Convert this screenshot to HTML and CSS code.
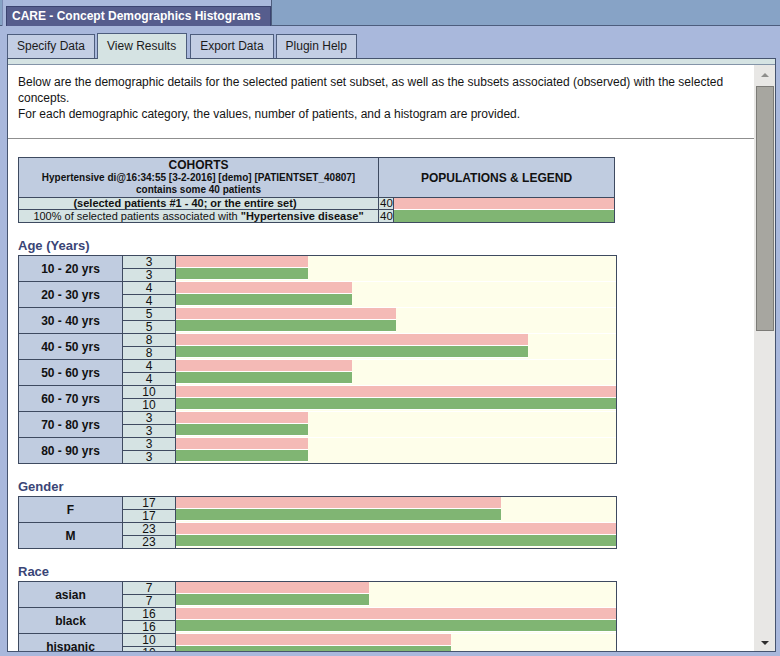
FILE: index.html
```html
<!DOCTYPE html>
<html>
<head>
<meta charset="utf-8">
<title>CARE - Concept Demographics Histograms</title>
<link rel="stylesheet" href="styles.css">
</head>
<body>
<div class="titlebar">
  <div class="title-tab"><div class="title">CARE - Concept Demographics Histograms</div></div>
</div>
<div class="tabs">
  <div class="tab">Specify Data</div>
  <div class="tab active">View Results</div>
  <div class="tab">Export Data</div>
  <div class="tab">Plugin Help</div>
</div>
<div class="frame">
  <div class="strip"></div>
  <div class="body">
    <div class="main">
      <div class="intro">
        Below are the demographic details for the selected patient set subset, as well as the subsets associated (observed) with the selected concepts.<br>
        For each demographic category, the values, number of patients, and a histogram are provided.
      </div>
      <div class="results">
        <div class="cohorts">
          <div class="c-head-left">
            <div class="c-title">COHORTS</div>
            <div class="c-sub">Hypertensive di@16:34:55 [3-2-2016] [demo] [PATIENTSET_40807]</div>
            <div class="c-sub">contains some 40 patients</div>
          </div>
          <div class="c-head-right">POPULATIONS &amp; LEGEND</div>
          <div class="c-desc c-sel">(selected patients #1 - 40; or the entire set)</div>
          <div class="c-num">40</div>
          <div class="c-barcell"><div class="c-bar pink"></div></div>
          <div class="c-desc c-assoc">100% of selected patients associated with <b>"Hypertensive disease"</b></div>
          <div class="c-num c-num2">40</div>
          <div class="c-barcell next"><div class="c-bar green"></div></div>
        </div>

        <div class="sec-title">Age (Years)</div>
        <div class="hist">
          <div class="lbl">10 - 20 yrs</div><div class="cnt">3</div>
          <div class="bars"><div class="bar pink" style="width:30%"></div><div class="bar green" style="width:30%"></div></div>
          <div class="cnt">3</div>

          <div class="lbl">20 - 30 yrs</div><div class="cnt">4</div>
          <div class="bars next"><div class="bar pink" style="width:40%"></div><div class="bar green" style="width:40%"></div></div>
          <div class="cnt">4</div>

          <div class="lbl">30 - 40 yrs</div><div class="cnt">5</div>
          <div class="bars next"><div class="bar pink" style="width:50%"></div><div class="bar green" style="width:50%"></div></div>
          <div class="cnt">5</div>

          <div class="lbl">40 - 50 yrs</div><div class="cnt">8</div>
          <div class="bars next"><div class="bar pink" style="width:80%"></div><div class="bar green" style="width:80%"></div></div>
          <div class="cnt">8</div>

          <div class="lbl">50 - 60 yrs</div><div class="cnt">4</div>
          <div class="bars next"><div class="bar pink" style="width:40%"></div><div class="bar green" style="width:40%"></div></div>
          <div class="cnt">4</div>

          <div class="lbl">60 - 70 yrs</div><div class="cnt">10</div>
          <div class="bars next"><div class="bar pink" style="width:100%"></div><div class="bar green" style="width:100%"></div></div>
          <div class="cnt">10</div>

          <div class="lbl">70 - 80 yrs</div><div class="cnt">3</div>
          <div class="bars next"><div class="bar pink" style="width:30%"></div><div class="bar green" style="width:30%"></div></div>
          <div class="cnt">3</div>

          <div class="lbl">80 - 90 yrs</div><div class="cnt">3</div>
          <div class="bars next"><div class="bar pink" style="width:30%"></div><div class="bar green" style="width:30%"></div></div>
          <div class="cnt">3</div>
        </div>

        <div class="sec-title">Gender</div>
        <div class="hist">
          <div class="lbl">F</div><div class="cnt">17</div>
          <div class="bars"><div class="bar pink" style="width:73.9%"></div><div class="bar green" style="width:73.9%"></div></div>
          <div class="cnt">17</div>

          <div class="lbl">M</div><div class="cnt">23</div>
          <div class="bars next"><div class="bar pink" style="width:100%"></div><div class="bar green" style="width:100%"></div></div>
          <div class="cnt">23</div>
        </div>

        <div class="sec-title">Race</div>
        <div class="hist">
          <div class="lbl">asian</div><div class="cnt">7</div>
          <div class="bars"><div class="bar pink" style="width:43.75%"></div><div class="bar green" style="width:43.75%"></div></div>
          <div class="cnt">7</div>

          <div class="lbl">black</div><div class="cnt">16</div>
          <div class="bars next"><div class="bar pink" style="width:100%"></div><div class="bar green" style="width:100%"></div></div>
          <div class="cnt">16</div>

          <div class="lbl">hispanic</div><div class="cnt">10</div>
          <div class="bars next"><div class="bar pink" style="width:62.5%"></div><div class="bar green" style="width:62.5%"></div></div>
          <div class="cnt">10</div>
        </div>
      </div>
    </div>
    <div class="scrollbar">
      <div class="sb-btn"><span class="arrow-up"></span></div>
      <div class="sb-track"><div class="sb-thumb"></div></div>
      <div class="sb-btn"><span class="arrow-down"></span></div>
    </div>
  </div>
</div>
</body>
</html>
```

FILE: styles.css
```css
* { box-sizing: border-box; }

body {
  margin: 0;
  width: 780px;
  height: 656px;
  overflow: hidden;
  background: #a9b8dc;
  font-family: "Liberation Sans", Arial, sans-serif;
  color: #111;
}

/* ---------- title bar ---------- */
.titlebar {
  height: 26px;
  background: #87a3c6;
  border-bottom: 1px solid #4d5d7d;
  display: flex;
  align-items: flex-start;
}

.title-tab {
  margin-left: 2px;
  height: 26px;
  margin-bottom: -1px;
  padding: 6px 0 0 3px;
  background: #a9b8dc;
  border-left: 1px solid #7d8db5;
  border-right: 1px solid #4d5d7d;
  position: relative;
}

.title {
  height: 20px;
  background: #565d8d;
  border: 1px solid #3b4370;
  border-bottom: none;
  color: #fff;
  font-weight: bold;
  font-size: 12px;
  line-height: 18px;
  padding: 0 9px 0 5px;
  white-space: nowrap;
}

/* ---------- tabs ---------- */
.tabs {
  display: flex;
  align-items: flex-end;
  height: 32px;
  padding-left: 7px;
  position: relative;
  z-index: 2;
}

.tab {
  height: 24px;
  padding: 0 9px;
  margin-right: 2px;
  border: 1px solid #4d5d7d;
  border-bottom: none;
  background: #c3cee4;
  font-size: 12px;
  line-height: 22px;
  color: #1b1b1b;
  white-space: nowrap;
}

.tab.active {
  height: 26px;
  margin-bottom: -1px;
  background: #d5e3e3;
  line-height: 24px;
  padding: 0 10px 0 9px;
  margin-right: 3px;
}

/* ---------- frame ---------- */
.frame {
  margin-left: 7px;
  width: 769px;
  height: 594px;
  border: 1px solid #46546f;
  background: #fff;
  display: flex;
  flex-direction: column;
}

.strip {
  height: 6px;
  background: #d5e3e3;
  border-bottom: 1px solid #8494a8;
  flex: none;
}

.body {
  flex: 1;
  display: flex;
  min-height: 0;
}

.main {
  flex: 1;
  overflow: hidden;
  background: #fff;
}

.intro {
  font-size: 12px;
  line-height: 16px;
  padding: 9px 10px 16px;
  border-bottom: 1px solid #8f8f8f;
  color: #141414;
}

.results {
  padding: 18px 0 0 10px;
}

/* ---------- cohorts table ---------- */
.cohorts {
  display: grid;
  grid-template-columns: 359px 14px 220px;
  grid-template-rows: 39px 11px 12px;
  gap: 1px;
  width: max-content;
  background: #3e4a60;
  border: 1px solid #3e4a60;
}

.c-head-left {
  background: #c0cce0;
  text-align: center;
  font-weight: bold;
}

.c-title {
  font-size: 12px;
  line-height: 14px;
}

.c-sub {
  font-size: 10px;
  line-height: 12px;
}

.c-head-right {
  grid-column: 2 / span 2;
  background: #c0cce0;
  font-weight: bold;
  font-size: 12px;
  display: flex;
  align-items: center;
  justify-content: center;
}

.c-desc {
  background: #d5e3e3;
  font-size: 11px;
  text-align: center;
  white-space: nowrap;
}

.c-sel {
  font-weight: bold;
  line-height: 11px;
  padding-right: 27px;
}

.c-assoc {
  line-height: 12px;
}

.c-num {
  background: #d5e3e3;
  font-size: 11.5px;
  line-height: 11px;
  padding-left: 1px;
}

.c-num2 {
  line-height: 12px;
}

.c-barcell {
  background: #fff;
}

.c-barcell.next {
  margin-top: -1px;
  border-top: 1px solid #fff;
}

.c-bar {
  height: 100%;
}

/* ---------- section titles ---------- */
.sec-title {
  font-weight: bold;
  font-size: 13px;
  line-height: 16px;
  color: #3a4576;
  margin: 15px 0 1px;
}

/* ---------- histogram tables ---------- */
.hist {
  display: grid;
  grid-template-columns: 103px 52px 440px;
  grid-auto-rows: 12px;
  gap: 1px;
  width: max-content;
  background: #3e4a60;
  border: 1px solid #3e4a60;
}

.lbl {
  grid-row: span 2;
  background: #c0cce0;
  font-weight: bold;
  font-size: 12px;
  display: flex;
  align-items: center;
  justify-content: center;
}

.cnt {
  background: #d5e3e3;
  font-size: 12px;
  line-height: 12px;
  text-align: center;
}

.bars {
  grid-column: 3;
  grid-row: span 2;
  background: #fefeea;
}

.bars.next {
  margin-top: -1px;
  border-top: 1px solid #fff;
}

.bar {
  height: 12px;
  border-bottom: 1px solid #fff;
}

.pink { background: #f4bab6; }
.green { background: #80b573; }

/* ---------- scrollbar ---------- */
.scrollbar {
  width: 21px;
  flex: none;
  background: #e8e7e5;
  display: flex;
  flex-direction: column;
}

.sb-btn {
  height: 21px;
  flex: none;
  display: flex;
  align-items: center;
  justify-content: center;
}

.arrow-up {
  width: 0;
  height: 0;
  border-left: 4px solid transparent;
  border-right: 4px solid transparent;
  border-bottom: 4px solid #8e8e8c;
  margin-top: -1px;
}

.arrow-down {
  width: 0;
  height: 0;
  border-left: 4px solid transparent;
  border-right: 4px solid transparent;
  border-top: 4px solid #2e2e2e;
  margin-top: 4px;
}

.sb-track {
  flex: 1;
  padding: 0 1px 0 2px;
}

.sb-thumb {
  height: 245px;
  background: #a7a6a0;
  border: 1px solid #7c7b77;
}
```
